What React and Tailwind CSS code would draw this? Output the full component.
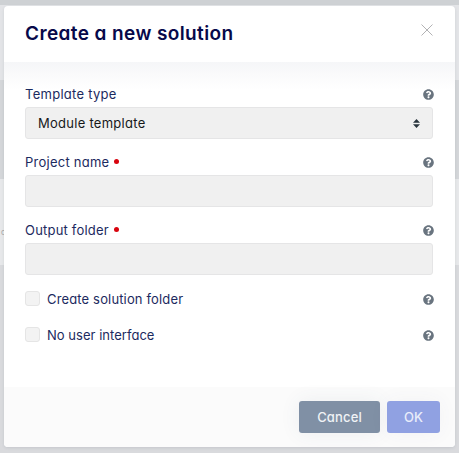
import React from "react";

function HelpIcon() {
  return (
    <svg className="-mr-px h-[11px] w-[11px] shrink-0" viewBox="0 0 512 512" fill="#69747f" aria-hidden="true">
      <path d="M504 256c0 137-111 248-248 248S8 393 8 256 119 8 256 8s248 111 248 248zM262.700 90c-54.500 0-89.300 23-116.500 63.800-3.500 5.300-2.400 12.400 2.700 16.300l34.700 26.300c5.200 3.900 12.600 3 16.700-2.100 17.900-22.700 30.100-35.800 57.300-35.800 20.400 0 45.700 13.100 45.700 33 0 15-12.400 22.700-32.500 34C247.100 238.500 216 254.900 216 296v4c0 6.600 5.400 12 12 12h56c6.600 0 12-5.400 12-12v-1.300c0-28.500 83.200-29.600 83.200-106.700 0-58-60.200-102-116.500-102zM256 338c-25.400 0-46 20.600-46 46s20.600 46 46 46 46-20.600 46-46-20.600-46-46-46z" />
    </svg>
  );
}

function Label({ text, spacing, required }) {
  return (
    <div className="flex h-5 items-center justify-between">
      <div className="flex items-center text-[#1c2a60]">
        <span className={`whitespace-nowrap pt-0.5 ${spacing}`}>{text}</span>
        {required && <span className="mb-px ml-[5px] h-[5px] w-[5px] rounded-full bg-[#d8040e]" />}
      </div>
      <HelpIcon />
    </div>
  );
}

function Check({ text, spacing }) {
  return (
    <div className="flex h-5 items-center justify-between">
      <div className="flex items-center gap-[7px] text-[#1c2a60]">
        <span className="mb-px h-[15px] w-[15px] rounded-[3px] border-[1.5px] border-[#e5e5e5] bg-[#f3f3f3]" />
        <span className={`whitespace-nowrap pt-px ${spacing}`}>{text}</span>
      </div>
      <HelpIcon />
    </div>
  );
}

const field = "mt-[3px] flex h-8 w-[408px] items-center rounded-[3px] border border-[#e5e5e6] bg-[#f0f0f0]";

export default function App() {
  return (
    <div className="relative h-[453px] w-[459px] overflow-hidden bg-[linear-gradient(to_bottom,#ced1d4_0_5px,#e3e4e7_5px_80px,#d4d6d9_80px_179px,#e7e8ea_179px_265px,#d9dadd_265px_453px)] px-1 pt-[6px] font-['Inter','Liberation_Sans',sans-serif] text-[13px] [font-feature-settings:'cv11']">
      <span className="absolute left-px top-[227px] text-[8px] leading-[10px] text-[#a5a6a9]">c</span>
      <div className="relative flex h-[441px] w-[451px] flex-col overflow-hidden rounded-[4px] bg-white shadow-[0_1px_3px_rgba(60,70,90,0.12)]">
        <div className="flex h-14 shrink-0 items-start justify-between px-[21px]">
          <h1 className="mt-[14px] whitespace-nowrap text-[19px] font-semibold leading-7 tracking-[0.4px] text-[#07094a]">Create a new solution</h1>
          <svg className="mr-[1.500px] mt-[18px] h-3 w-3" viewBox="0 0 12 12" fill="none" stroke="#a9a9ab" strokeWidth="0.9"><path d="M0.500 0.500 11.500 11.500M11.500 0.500 0.500 11.500" /></svg>
        </div>
        <div className="flex h-[325px] shrink-0 flex-col bg-[linear-gradient(to_bottom,#f5f6f8_0,#fafafb_12px,#ffffff_28px)] pl-[21px] pr-[22px] pt-[22px]">
          <Label text="Template type" spacing="tracking-[0.27px]" />
          <div className={`${field} justify-between pl-3 pr-3 text-[#17181a]`}>
            <span className="pt-px tracking-[0.27px]">Module template</span>
            <svg className="h-[9px] w-[7px]" viewBox="0 0 7 9" fill="#29343d"><path d="M0 3.800 3.500 0 7 3.800ZM0 5.200h7L3.500 9Z" /></svg>
          </div>
          <div className="mt-[13px]"><Label text="Project name" spacing="tracking-[0.25px]" required /></div>
          <div className={field} />
          <div className="mt-[13px]"><Label text="Output folder" spacing="tracking-[0.2px]" required /></div>
          <div className={field} />
          <div className="mt-[14px]"><Check text="Create solution folder" spacing="tracking-[0.15px]" /></div>
          <div className="mt-4"><Check text="No user interface" spacing="tracking-[0.03px]" /></div>
        </div>
        <div className="flex h-[60px] shrink-0 items-start justify-end gap-[7px] bg-[#fbfbfb] pr-[15px] pt-[14px]">
          <button className="h-8 w-[81px] rounded-[3px] bg-[#8090a5] pt-px font-medium tracking-[0.15px] text-[#f0f3f6] shadow-[0_0_20px_rgba(70,85,120,0.08)]">Cancel</button>
          <button className="h-8 w-[53px] rounded-[3px] bg-[#90a1e2] pt-px font-medium text-[#e9edfa] shadow-[0_0_20px_rgba(70,85,120,0.05)]">OK</button>
        </div>
      </div>
    </div>
  );
}
